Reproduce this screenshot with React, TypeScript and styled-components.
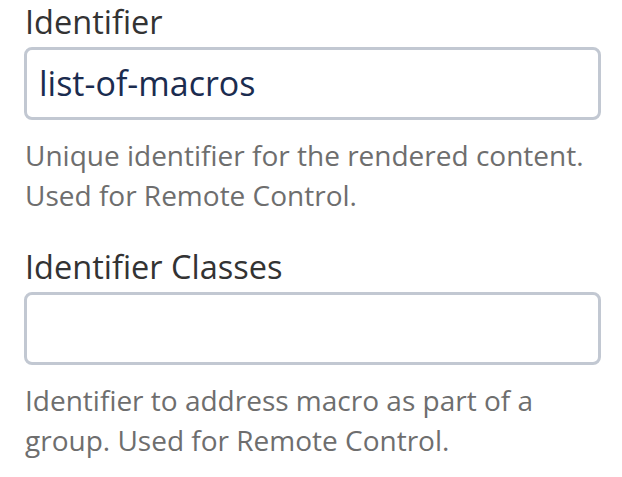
import React from 'react'
import styled, { createGlobalStyle } from 'styled-components'

const GlobalStyle = createGlobalStyle`
  html, body {
    margin: 0;
    padding: 0;
    background: #ffffff;
  }
  body {
    font-family: 'Open Sans', 'Noto Sans', sans-serif;
    color: #333333;
  }
`

const Form = styled.form`
  padding: 0 21px 0 24px;
  width: 577px;
`

const Group = styled.div`
  display: flex;
  flex-direction: column;
  & + & {
    margin-top: 30px;
  }
`

const Label = styled.label`
  display: block;
  font-size: 32.5px;
  line-height: 44px;
  color: #333333;
  padding-left: 1px;
  margin-bottom: 3px;
`

const Input = styled.input`
  box-sizing: border-box;
  width: 100%;
  height: 73px;
  padding: 0 12px 2px;
  border: 3px solid #c2c8d2;
  border-radius: 8px;
  background: #ffffff;
  font-family: inherit;
  font-size: 34px;
  color: #1b2c4f;
  outline: none;
`

const Help = styled.small`
  display: block;
  margin-top: 15px;
  padding-left: 1px;
  font-size: 28px;
  line-height: 40px;
  color: #6e6e6e;
`

type FieldProps = {
  id: string
  label: string
  value?: string
  help: string
}

const Field = ({ id, label, value, help }: FieldProps) => (
  <Group>
    <Label htmlFor={id}>{label}</Label>
    <Input id={id} type="text" defaultValue={value} />
    <Help>{help}</Help>
  </Group>
)

const App = () => {
  return (
    <>
      <GlobalStyle />
      <Form onSubmit={(e) => e.preventDefault()}>
        <Field
          id="identifier"
          label="Identifier"
          value="list-of-macros"
          help="Unique identifier for the rendered content. Used for Remote Control."
        />
        <Field
          id="identifier-classes"
          label="Identifier Classes"
          help="Identifier to address macro as part of a group. Used for Remote Control."
        />
      </Form>
    </>
  )
}

export default App
